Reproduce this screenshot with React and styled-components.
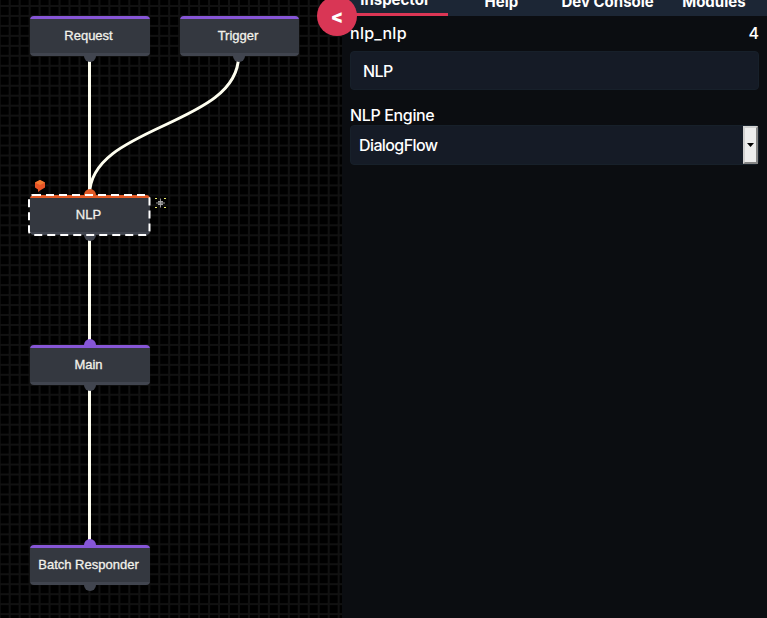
import React from "react";
import styled, { createGlobalStyle } from "styled-components";

const Global = createGlobalStyle`
  * { box-sizing: border-box; }
  body { margin: 0; background: #000; color: #fff; font-family: Inter, sans-serif; overflow: hidden; }
`;

const Layout = styled.div`
  position: relative;
  display: grid;
  grid-template-columns: 342px 1fr;
  width: 767px;
  height: 618px;
  overflow: hidden;
`;

const Canvas = styled.main`
  position: relative;
  overflow: hidden;
  background-color: #000;
  background-image:
    linear-gradient(90deg, #111 2px, transparent 2px),
    linear-gradient(#111 2px, transparent 2px);
  background-size: 9.97px 9.97px;
  background-position: 8.7px 0, 0 5px;
`;

const Wires = styled.svg`
  position: absolute;
  inset: 0;
  fill: none;
  stroke: #fffff0;
  stroke-width: 3;
`;

const Node = styled.div`
  position: absolute;
  left: ${(p) => p.$x}px;
  top: ${(p) => p.$y}px;
  width: ${(p) => p.$w || 120}px;
  height: 40px;
`;

const NodeBody = styled.div`
  position: relative;
  height: 100%;
  display: flex;
  align-items: center;
  justify-content: center;
  padding: 0 2px 1px 0;
  border-radius: 4px;
  background: linear-gradient(${(p) => p.$accent} 3px, #343840 3px, #343840 37px, #41454f 37px);
  color: #f2f1ea;
  font: 13px "Liberation Sans", Arial, sans-serif;
  -webkit-text-stroke: 0.3px #f2f1ea;
  white-space: nowrap;
`;

const Selection = styled.svg`
  position: absolute;
  left: -1.5px;
  top: -1px;
  fill: none;
  stroke: #fff;
  stroke-width: 2;
  stroke-dasharray: 8 5;
`;

const Port = styled.svg`
  position: absolute;
  left: calc(50% - 6px);
  ${(p) => (p.$input ? "top: -6px;" : "bottom: -6px;")}
  fill: ${(p) => p.$color};
`;

const Marker = styled.svg`
  position: absolute;
  left: ${(p) => p.$x}px;
  top: ${(p) => p.$y}px;
`;

const Panel = styled.aside`
  background: #0b0d11;
  overflow: hidden;
`;

const Tabs = styled.nav`
  display: grid;
  grid-template-columns: repeat(4, 106.25px);
  height: 16px;
  background: #1c2635;
`;

const Tab = styled.div`
  display: flex;
  justify-content: center;
  height: 16px;
  border-bottom: ${(p) => (p.$active ? "3px solid #dc3655" : "0")};
  font-size: 15px;
  font-weight: 700;
  line-height: 20px;
  white-space: nowrap;
`;

const TabLabel = styled.span`
  margin-top: ${(p) => (p.$active ? "-10px" : "-8px")};
`;

const Form = styled.div`
  padding: 7px 8px;
  font-size: 16px;
  font-weight: 500;
  line-height: 20px;
`;

const Heading = styled.div`
  display: flex;
  justify-content: space-between;
  height: 28px;
`;

const NodeType = styled.span`
  letter-spacing: 0.25px;
`;

const Field = styled.div`
  display: flex;
  align-items: center;
  height: 39px;
  padding-left: 12px;
  border: 1px solid #17202a;
  border-radius: 4px;
  background: #151b26;
  letter-spacing: -0.6px;
`;

const Label = styled.div`
  height: 20px;
  margin-top: 15px;
  letter-spacing: -0.35px;
`;

const Select = styled(Field)`
  justify-content: space-between;
  height: 40px;
  padding: 0 0 0 8px;
`;

const SelectButton = styled.span`
  display: flex;
  align-items: center;
  justify-content: center;
  width: 15px;
  height: 38px;
  border: 2px solid;
  border-color: #d0d0d0 #858585 #858585 #d0d0d0;
  background: #ececec;
`;

const Toggle = styled.button`
  position: absolute;
  left: 317px;
  top: -4px;
  width: 40px;
  height: 40px;
  padding: 0;
  border: 0;
  border-radius: 50%;
  background: #d93655;
  color: #fff;
  font: 900 18px/42px Inter, sans-serif;
`;

const PURPLE = "#8656d6";
const ORANGE = "#e25a26";

const nodes = [
  { label: "Request", x: 29.5, y: 16, accent: PURPLE },
  { label: "Trigger", x: 179.5, y: 16, w: 119, accent: PURPLE },
  { label: "NLP", x: 29.5, y: 195, accent: ORANGE, input: true, selected: true },
  { label: "Main", x: 29.5, y: 345, accent: PURPLE, input: true },
  { label: "Batch Responder", x: 29.5, y: 545, accent: PURPLE, input: true },
];

function PortDot(props) {
  return (
    <Port width="12" height="12" {...props}>
      <circle cx="6" cy="6" r="6" />
    </Port>
  );
}

export default function App() {
  return (
    <>
      <Global />
      <Layout>
        <Canvas>
          <Wires width="342" height="618">
            <path d="M89.5 56V195M89.5 235V345M89.5 385V545M238.5 56C238.5 126 89.5 125 89.5 195" />
          </Wires>
          {nodes.map((n) => (
            <Node key={n.label} $x={n.x} $y={n.y} $w={n.w}>
              {n.input && <PortDot $input $color={n.accent} />}
              <PortDot $color="#41454f" />
              <NodeBody $accent={n.accent}>{n.label}</NodeBody>
              {n.selected && (
                <Selection width="123" height="42">
                  <rect x="1" y="1" width="120.5" height="40" rx="4" />
                </Selection>
              )}
            </Node>
          ))}
          <Marker $x={34} $y={179} width="12" height="14">
            <path d="M1 3.5 6 1l5 2.5v5L6 11.5 4 13V10.5L1 8.5Z" fill="#e85426" />
            <path d="M1 3.5 6 1l5 2.5L6 6Z" fill="#f17a32" />
          </Marker>
          <Marker $x={154} $y={197} width="13" height="13">
            <path d="M1 1.5h2M10 1.5h2M1 10.5h2M10 10.5h2" stroke="#eeee70" />
            <path d="M2 6h9M6.5 1.5v9M5 4v4M8 4v4M4 4.5h5M4 7.5h5" stroke="#aaa" strokeWidth=".9" />
          </Marker>
        </Canvas>
        <Panel>
          <Tabs>
            <Tab $active><TabLabel $active>Inspector</TabLabel></Tab>
            <Tab><TabLabel>Help</TabLabel></Tab>
            <Tab><TabLabel>Dev Console</TabLabel></Tab>
            <Tab><TabLabel>Modules</TabLabel></Tab>
          </Tabs>
          <Form>
            <Heading><NodeType>nlp_nlp</NodeType><span>4</span></Heading>
            <Field>NLP</Field>
            <Label>NLP Engine</Label>
            <Select>
              DialogFlow
              <SelectButton>
                <svg width="7" height="4"><path d="M0 0h7L3.5 4Z" fill="#000" /></svg>
              </SelectButton>
            </Select>
          </Form>
        </Panel>
        <Toggle>&lt;</Toggle>
      </Layout>
    </>
  );
}
